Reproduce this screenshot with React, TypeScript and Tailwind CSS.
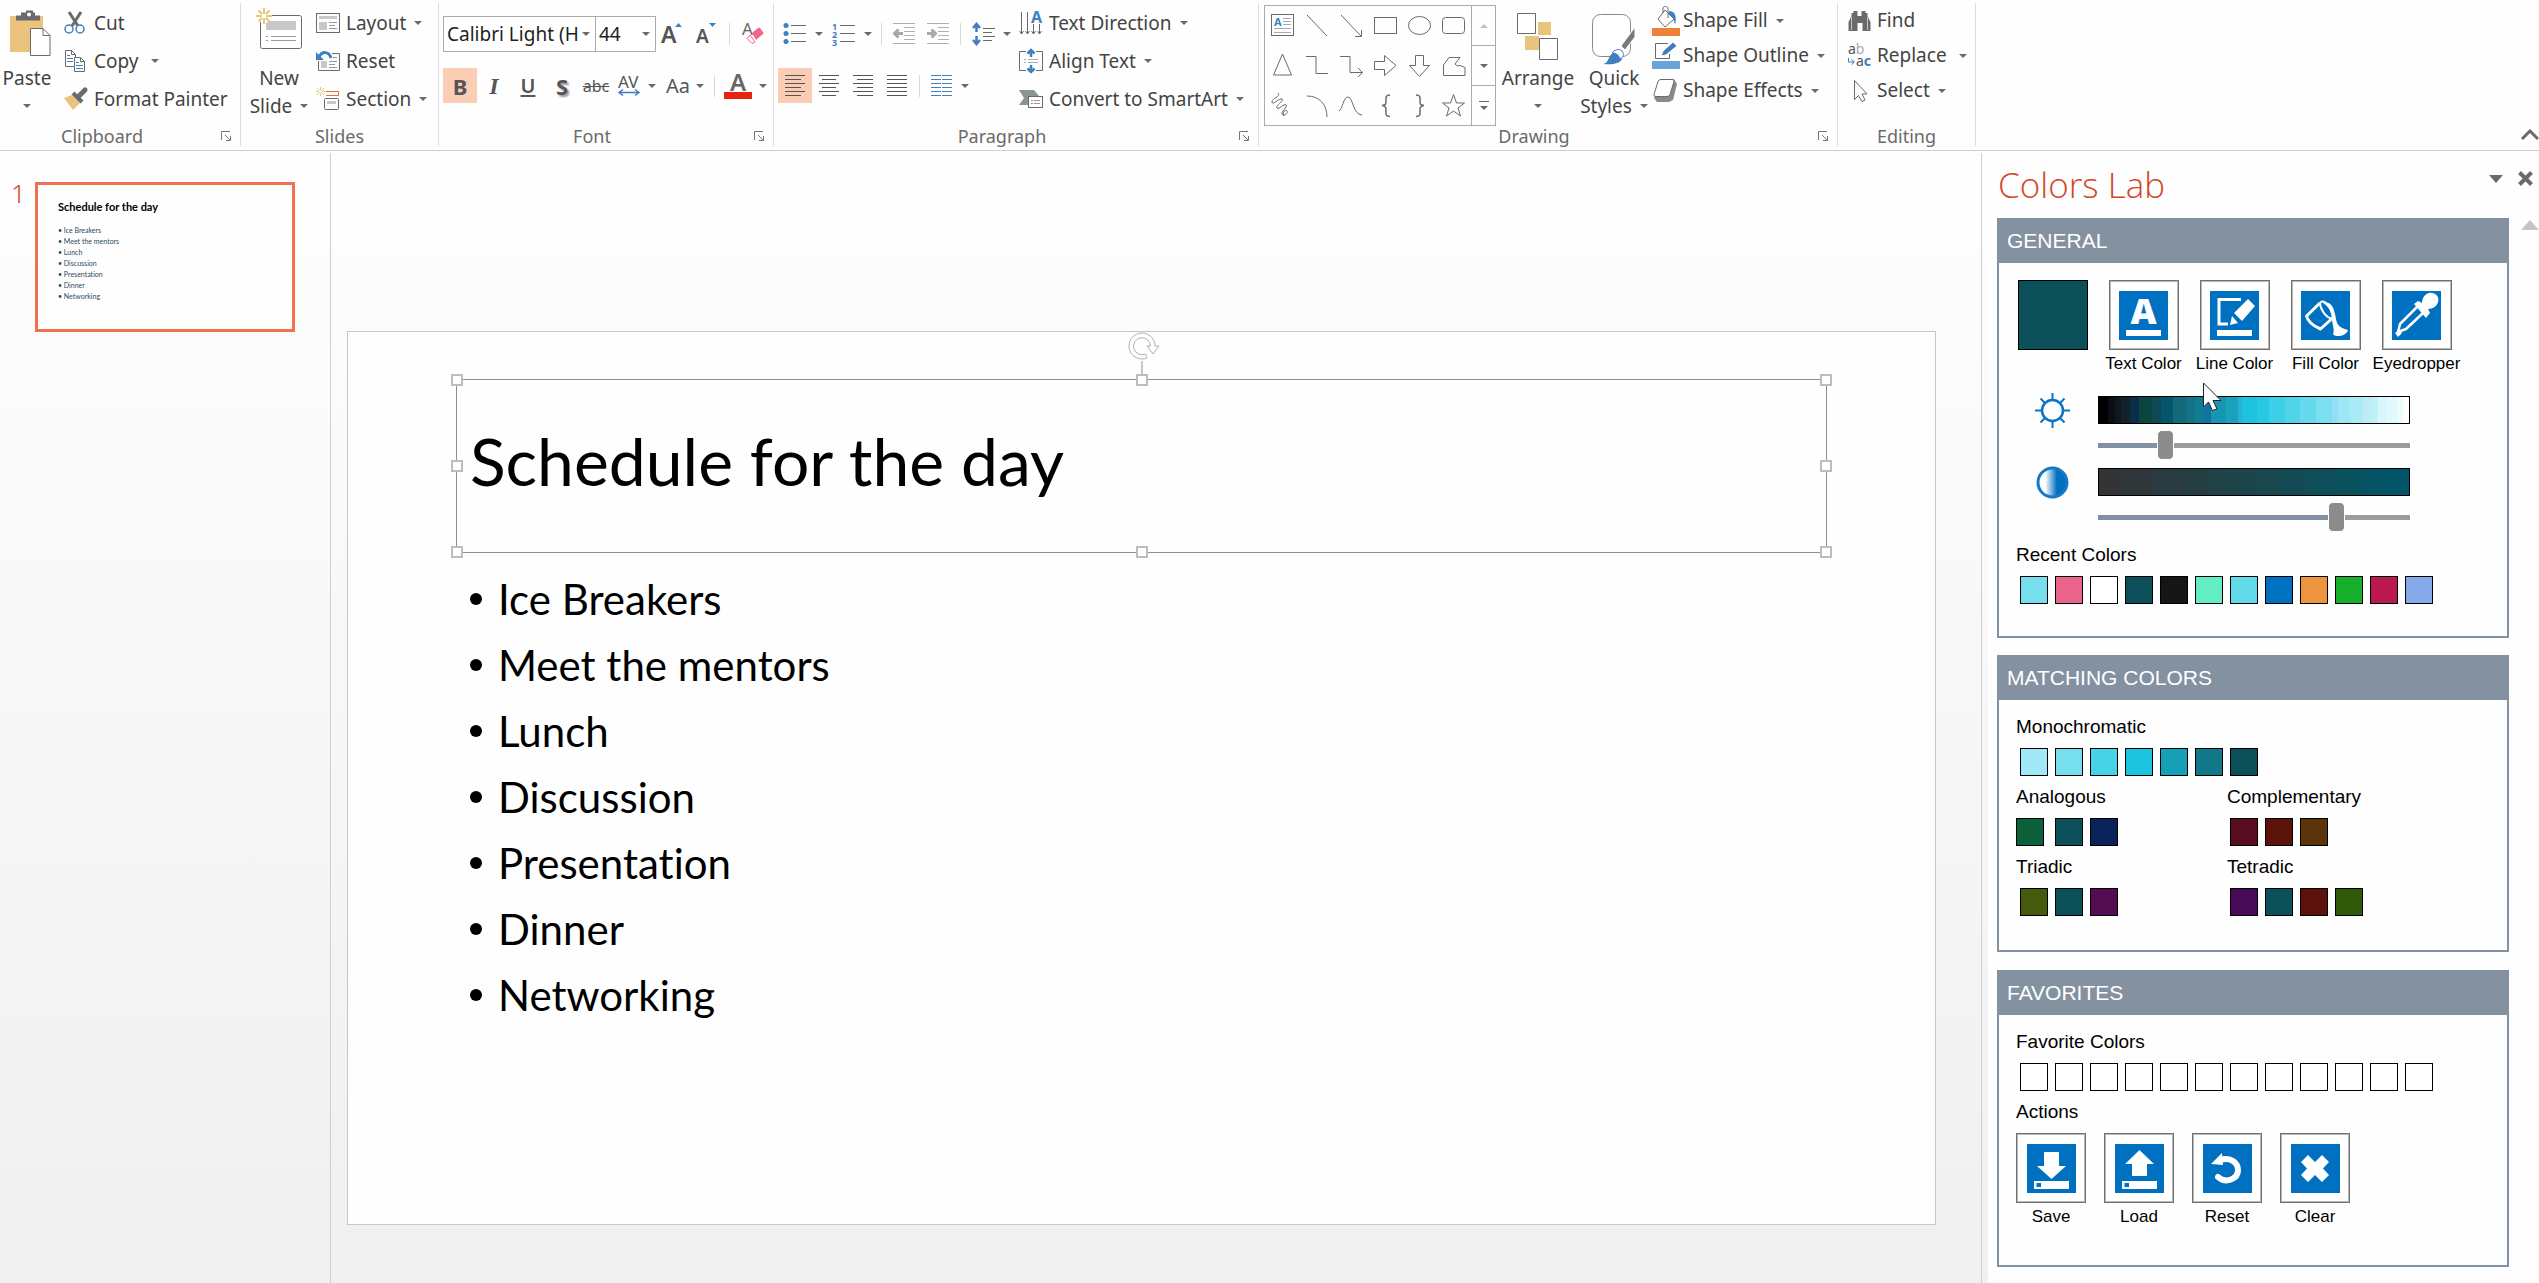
import React, { useState } from "react";

type Kids = { children?: React.ReactNode };

/* ---------- small building blocks ---------- */

const Icon = ({ w, h, children }: { w: number; h: number } & Kids) => (
  <svg width={w} height={h} viewBox={`0 0 ${w} ${h}`} fill="none" stroke="#6a6a6a" className="shrink-0 overflow-visible" aria-hidden="true">
    {children}
  </svg>
);

const Caret = ({ light = false }: { light?: boolean }) => (
  <svg width="8" height="4" viewBox="0 0 8 4" className="shrink-0" aria-hidden="true">
    <path d="M0 0h8L4 4z" fill={light ? "#c4c4c4" : "#6a6a6a"} />
  </svg>
);

const Launcher = () => (
  <svg width="11" height="11" viewBox="0 0 11 11" fill="none" stroke="#777" aria-hidden="true">
    <path d="M.5 9V.5H9M4 4l5 5M9.5 5v4.500H5" />
  </svg>
);

const Group = ({ label, launcher, className, labelClass = "", children }: { label: string; launcher?: boolean; className: string; labelClass?: string } & Kids) => (
  <section aria-label={label} className={`flex shrink-0 flex-col border-r border-[#dcdcdc] ${className}`}>
    <div className="flex h-[123px] items-start">{children}</div>
    <div className={`flex h-5 items-center ${labelClass}`}>
      <span className="flex-1 text-center text-[18px] leading-5 text-[#6a6a6a]">{label}</span>
      {launcher && (
        <button aria-label={`${label} settings`} className="flex w-7 justify-center">
          <Launcher />
        </button>
      )}
    </div>
  </section>
);

const Item = ({ icon, label, caret, tall = true, wideGap = false }: { icon: React.ReactNode; label: string; caret?: boolean; tall?: boolean; wideGap?: boolean }) => (
  <button className={`flex items-center whitespace-nowrap ${tall ? "h-[38px]" : "h-[35px]"}`}>
    {icon}
    <span className="ml-1.5">{label}</span>
    {caret && (
      <span className={wideGap ? "ml-3" : "ml-2"}>
        <Caret />
      </span>
    )}
  </button>
);

const Big = ({ icon, top, bottom, className }: { icon: React.ReactNode; top: string; bottom?: string; className: string }) => (
  <button className={`flex shrink-0 flex-col items-center whitespace-nowrap leading-7 ${className}`}>
    {icon}
    <span>{top}</span>
    <span className="flex h-7 items-center gap-2">
      {bottom}
      <Caret />
    </span>
  </button>
);

const Tool = ({ label, active, className = "w-[34px]", children }: { label: string; active?: boolean; className?: string } & Kids) => (
  <button aria-label={label} className={`flex h-[35px] shrink-0 items-center justify-center ${active ? "bg-[#fbcdb5]" : ""} ${className}`}>
    {children}
  </button>
);

const Sep = () => <span className="mx-[5px] h-[22px] w-px shrink-0 bg-[#d8d8d8]" />;

const Combo = ({ label, value, className }: { label: string; value: string; className: string }) => (
  <div className={`relative h-9 shrink-0 ${className}`}>
    <select aria-label={label} className="h-full w-full appearance-none overflow-hidden rounded-none border border-[#ababab] bg-white pr-[17px] pl-[3px] text-[19px] text-[#1e1e1e]">
      <option>{value}</option>
    </select>
    <span className="pointer-events-none absolute top-1/2 right-1.5 -translate-y-1/2">
      <Caret />
    </span>
  </div>
);

/* ---------- ribbon icons ---------- */

const PasteIcon = () => (
  <Icon w={48} h={65}>
    <path d="M7 17h33v12H27v24H7z" fill="#eac37c" stroke="none" />
    <path d="M13 21.500v-5h5v-3h5v-2h7v2h2v3h5v5z" fill="#6a6a6a" stroke="none" />
    <circle cx="26" cy="15.500" r="2" fill="#fff" stroke="none" />
    <path d="M27.500 29.500H40l7 7v20H27.500z" fill="#fff" />
    <path d="M40 29.500v7h7" />
  </Icon>
);
const CutIcon = () => (
  <Icon w={22} h={24}>
    <path d="M5 1l9 14M17 1L8 15" strokeWidth="3" />
    <circle cx="5" cy="18" r="4" stroke="#3f7fbf" strokeWidth="1.500" />
    <circle cx="16" cy="18" r="4" stroke="#3f7fbf" strokeWidth="1.500" />
  </Icon>
);
const CopyIcon = () => (
  <Icon w={22} h={24}>
    <path d="M1.500 1.500h6l4 4v12h-10zM7.500 1.500v4h4" fill="#fff" />
    <path d="M3 6.500h3M3 9.500h6M3 12.500h6" stroke="#3f7fbf" />
    <path d="M10.500 8.500h6l4 4v10h-10zM16.500 8.500v4h4" fill="#fff" />
    <path d="M12 13.500h3M12 16.500h7M12 19.500h7" stroke="#3f7fbf" />
  </Icon>
);
const BrushIcon = () => (
  <Icon w={24} h={24}>
    <path d="M0 11l8-3 8 8-7 7z" fill="#eac37c" stroke="none" />
    <path d="M9 6l9 9" strokeWidth="4" />
    <path d="M15 9l6-6" strokeWidth="5" strokeLinecap="round" />
  </Icon>
);
const spark = "M8 0v16M0 8h16M2.500 2.500l11 11M13.500 2.500l-11 11";
const NewSlideIcon = () => (
  <Icon w={48} h={65}>
    <rect x="5.500" y="16.500" width="41" height="33" rx="2" fill="#fff" />
    <path d="M11 22h30v9H11z" fill="#c8c8c8" stroke="none" />
    <path d="M11 37.500h2M16 37.500h25M11 41.500h2M16 41.500h25" stroke="#999" />
    <g transform="translate(1 9)">
      <circle cx="8" cy="8" r="7" fill="#fff" stroke="none" />
      <path d={spark} stroke="#eac37c" strokeWidth="2" />
      <circle cx="8" cy="8" r="2.500" fill="#fff" stroke="none" />
    </g>
  </Icon>
);
const LayoutIcon = () => (
  <Icon w={24} h={22}>
    <rect x=".5" y="1.500" width="23" height="19" />
    <path d="M3 4h18v3H3zM3 10h8v8H3z" fill="#c8c8c8" stroke="none" />
    <path d="M13 10.500h8M13 13.500h6M13 16.500h8" stroke="#999" />
  </Icon>
);
const ResetIcon = () => (
  <Icon w={24} h={24}>
    <path d="M16 4.500h7.500v17h-21V12" />
    <path d="M5 12h6v7H5z" fill="#c8c8c8" stroke="none" />
    <path d="M17 8.500h4M13 12.500h8M13 15.500h6M13 18.500h8" stroke="#999" />
    <path d="M3 8c3-6 10-6 12 1" stroke="#3f7fbf" strokeWidth="3" />
    <path d="M0 3v8h8z" fill="#3f7fbf" stroke="none" />
  </Icon>
);
const SectionIcon = () => (
  <Icon w={24} h={24}>
    <path d="M4.500 0v9M0 4.500h9M1 1l7 7M8 1L1 8" stroke="#eac37c" />
    <circle cx="4.500" cy="4.500" r="1.500" fill="#fff" stroke="none" />
    <path d="M10 4.500h12.500v4H10" stroke="#e8703a" />
    <rect x="8.500" y="11.500" width="14" height="11" rx="1" />
    <path d="M11 14h9v3h-9z" fill="#c8c8c8" stroke="none" />
  </Icon>
);
const BulletsIcon = ({ numbered = false }: { numbered?: boolean }) => (
  <Icon w={23} h={23}>
    {[2.5, 10.5, 18.5].map((y, i) => (
      <React.Fragment key={y}>
        <path d={`M8 ${y}h15`} />
        {numbered ? (
          <text x="0" y={y + 4} fontSize="9" fontWeight="700" fill="#3f7fbf" stroke="none">{i + 1}</text>
        ) : (
          <circle cx="3" cy={y} r="2.500" fill="#3f7fbf" stroke="none" />
        )}
      </React.Fragment>
    ))}
  </Icon>
);
const IndentIcon = ({ flip = false }: { flip?: boolean }) => (
  <Icon w={22} h={22}>
    <path d="M0 .5h22M11 4.500h11M11 8.500h11M11 12.500h11M11 16.500h11M0 20.500h22" stroke="#b0b0b0" />
    <path d={flip ? "M0 10.500h8M4.500 6.500l4 4-4 4" : "M10 10.500H2M5.500 6.500l-4 4 4 4"} stroke="#a8a8a8" strokeWidth="3" />
  </Icon>
);
const SpacingIcon = () => (
  <Icon w={23} h={24}>
    <path d="M4.500 3v7M4.500 14v7M1 6l3.500-4L8 6M1 18l3.500 4L8 18" stroke="#3f7fbf" strokeWidth="2.500" />
    <path d="M11 6.500h12M11 10.500h9M11 14.500h12M11 18.500h9" />
  </Icon>
);
const alignLines: Record<string, string> = {
  left: "M0 .5h20M0 4.500h16M0 8.500h20M0 12.500h16M0 16.500h20M0 20.500h16",
  center: "M0 .5h20M3 4.500h14M0 8.500h20M3 12.500h14M0 16.500h20M3 20.500h14",
  right: "M0 .5h20M4 4.500h16M0 8.500h20M4 12.500h16M0 16.500h20M4 20.500h16",
  justify: "M0 .5h20M0 4.500h20M0 8.500h20M0 12.500h20M0 16.500h20M0 20.500h20",
};
const AlignIcon = ({ kind }: { kind: string }) => (
  <Icon w={20} h={21}>
    <path d={alignLines[kind]} stroke="#555" />
  </Icon>
);
const ColumnsIcon = () => (
  <Icon w={21} h={21}>
    <path d="M0 .5h10M11 .5h10M0 4.500h10M11 4.500h10M0 8.500h10M11 8.500h10M0 12.500h10M11 12.500h10M0 16.500h10M11 16.500h10M0 20.500h10M11 20.500h10" stroke="#3f7fbf" />
  </Icon>
);
const TextDirIcon = () => (
  <Icon w={24} h={26}>
    <path d="M2.500 2v22M8.500 2v22M14.500 14v10M20.500 14v10M.5 21l2 3 2-3M6.500 21l2 3 2-3M12.500 21l2 3 2-3M18.500 21l2 3 2-3" />
    <text x="12" y="13" fontSize="16" fontWeight="700" fill="#3f7fbf" stroke="none">A</text>
  </Icon>
);
const AlignTextIcon = () => (
  <Icon w={24} h={24}>
    <path d="M7 2.500H.5v19H7M17 2.500h6.500v19H17" />
    <path d="M5 10.500h2M9 10.500h10M5 13.500h2M9 13.500h10" stroke="#aaa" />
    <path d="M12 2v6M12 22v-6M8.500 4.500L12 1l3.500 3.500M8.500 19.500L12 23l3.500-3.500" stroke="#3f7fbf" strokeWidth="2.500" />
  </Icon>
);
const SmartArtIcon = () => (
  <Icon w={24} h={22}>
    <path d="M0 2h15l5 6h-8v9H0l5-7z" fill="#8a9690" stroke="none" />
    <rect x="9.500" y="8.500" width="14" height="11" fill="#fff" />
    <path d="M12 12.500h2M15 12.500h6M12 15.500h2M15 15.500h6" stroke="#999" />
  </Icon>
);
const ArrangeIcon = () => (
  <Icon w={42} h={65}>
    <path d="M21 23h13v13H21zM8 37h14v14H8z" fill="#eac37c" stroke="none" />
    <path d="M.5 14.500h18v20H.5zM22.500 39.500h18v21h-18z" fill="#fff" />
  </Icon>
);
const QuickIcon = () => (
  <Icon w={46} h={65}>
    <rect x="1.500" y="15.500" width="38" height="42" rx="8" fill="#fff" stroke="#888" />
    <path d="M30 47L44 28v10L34 51z" fill="#7a7a7a" stroke="#fff" />
    <path d="M28 48l5 5" stroke="#fff" strokeWidth="2" />
    <path d="M12 65c5-1 5-5 7-8 2-4 8-5 11-2 3 4 0 8-4 9-5 2-10 1-14 1z" fill="#3f7fbf" stroke="none" />
    <path d="M21 54c2-3 7-5 10-2s1 7-2 8c-1-4-4-6-8-6z" fill="#fff" stroke="#3f7fbf" />
  </Icon>
);
const FillIcon = () => (
  <Icon w={28} h={32}>
    <path d="M0 23h28v8H0z" fill="#ed8136" stroke="none" />
    <path d="M13 5l9 9-9 8-7-8z" fill="#fff" />
    <path d="M11 8V3c0-2 5-2 5 0v10" />
    <path d="M17 6c6 0 8 5 6 14-1-5-1-8-6-10z" fill="#3f7fbf" stroke="none" />
  </Icon>
);
const OutlineIcon = () => (
  <Icon w={28} h={32}>
    <path d="M0 21h28v8H0z" fill="#69a4d8" stroke="none" />
    <path d="M16 3.500H3.500v15h14V14" />
    <path d="M9 16l2-5L21 2l4 4-11 9z" fill="#3f7fbf" stroke="#fff" />
  </Icon>
);
const EffectsIcon = () => (
  <Icon w={28} h={26}>
    <path d="M8 3l14-2 3 5-4 16-4 2H5l-3-4z" fill="#8a8a8a" stroke="none" />
    <path d="M9 1.500h11q2.500 0 2 2l-4 13q-.5 2-3 2H4q-2.500 0-2-2l4-13q.5-2 3-2z" fill="#fff" />
  </Icon>
);
const FindIcon = () => (
  <Icon w={23} h={22}>
    <path d="M0 21V12L3 6V3h2V1h4v5h4V1h4v2h2v3l3 6v9h-8v-8h-5v8z" transform="translate(.5)" fill="#6a6a6a" stroke="none" />
    <path d="M3.500 7v13M19.500 7v13" stroke="#fff" strokeWidth=".6" />
  </Icon>
);
const ReplaceIcon = () => (
  <Icon w={23} h={24}>
    <text x="0" y="10" fontSize="14" fill="#555" stroke="none">a<tspan fill="#aaa">b</tspan></text>
    <text x="8" y="22" fontSize="14" fill="#555" stroke="none">a<tspan fontWeight="700" fill="#3f7fbf">c</tspan></text>
    <path d="M.5 14v4H6M3.500 15.500l3 2.500-3 2.500" stroke="#3f7fbf" />
  </Icon>
);
const SelectIcon = () => (
  <Icon w={23} h={24}>
    <path d="M6.500 1.500v19l4-4 3.500 6 3-1.500-3-6h5z" />
  </Icon>
);

const shapes: { name: string; art: React.ReactNode }[] = [
  { name: "Text box", art: <><rect x="2.500" y="2.500" width="22" height="21" /><path d="M14 6.500h8M14 9.500h8M14 12.500h8M5 16.500h17M5 20.500h17" stroke="#aaa" /><text x="5" y="14" fontSize="11" fontWeight="700" fill="#3f7fbf" stroke="none">A</text></> },
  { name: "Line", art: <path d="M4 3l20 21" /> },
  { name: "Arrow", art: <path d="M4 3l20 21M24.500 18v6.500H18" /> },
  { name: "Rectangle", art: <rect x="2.500" y="5.500" width="22" height="16" /> },
  { name: "Oval", art: <ellipse cx="13.500" cy="13.500" rx="11" ry="9" /> },
  { name: "Rounded rectangle", art: <rect x="2.500" y="5.500" width="22" height="16" rx="3" /> },
  { name: "Triangle", art: <path d="M13.500 2l9 21h-18z" /> },
  { name: "Elbow connector", art: <path d="M3 4.500h10v17h12" /> },
  { name: "Elbow arrow", art: <path d="M3 4.500h10v16h12M21 16l4.500 4.500L21 25" /> },
  { name: "Right arrow", art: <path d="M2.500 9.500h10v-6L24 13.500l-11.500 10v-6h-10z" /> },
  { name: "Down arrow", art: <path d="M9.500 3.500h8v10h6l-10 11-10-11h6z" /> },
  { name: "Freeform", art: <path d="M9 5.500h11l-5 6.500q2 3 5 1.500l5 2v8H3.500V13z" /> },
  { name: "Scribble", art: <path d="M9 1c3 4-6 5-6 9s7-4 10-3-7 7-5 9 7-5 9-3-5 6-4 9 7-1 5-3-5 1-3 5" /> },
  { name: "Arc", art: <path d="M4 4c12 0 20 8 20 21" /> },
  { name: "Curve", art: <path d="M2 19C6 17 6 5 11 5s5 18 14 18" /> },
  { name: "Left brace", art: <path d="M18 3c-5 0-4 3-4 6s0 4-4 4.500c4 .5 4 2 4 5s-1 6 4 6" strokeWidth="1.500" /> },
  { name: "Right brace", art: <path d="M10 3c5 0 4 3 4 6s0 4 4 4.500c-4 .5-4 2-4 5s1 6-4 6" strokeWidth="1.500" /> },
  { name: "Star", art: <path d="M13.500 2.500l3 8.500h8l-6.500 5 2.500 8-7-5-7 5 2.500-8-6.500-5h8z" /> },
];

/* ---------- ribbon ---------- */

const Ribbon = () => (
  <header className="flex h-[151px] border-b border-[#cfcfcf] bg-[#fefefe] pt-[3px] pb-1">
    <Group label="Clipboard" launcher className="w-[241px]" labelClass="-ml-2">
      <Big icon={<span className="-mt-1"><PasteIcon /></span>} top="Paste" className="w-[54px]" />
      <div className="ml-2.5 flex flex-col pt-px">
        <span className="[&>button>span]:ml-2"><Item icon={<CutIcon />} label="Cut" /></span>
        <span className="[&>button>span]:ml-2 [&>button>span:last-child]:ml-3"><Item icon={<CopyIcon />} label="Copy" caret /></span>
        <span><Item icon={<BrushIcon />} label="Format Painter" /></span>
      </div>
    </Group>
    <Group label="Slides" className="w-[198px]">
      <Big icon={<span className="-mt-1"><NewSlideIcon /></span>} top="New" bottom="Slide" className="ml-2 w-[60px]" />
      <div className="ml-[7px] flex flex-col pt-px">
        <Item icon={<LayoutIcon />} label="Layout" caret />
        <Item icon={<ResetIcon />} label="Reset" />
        <Item icon={<SectionIcon />} label="Section" caret />
      </div>
    </Group>
    <Group label="Font" launcher className="w-[335px]">
      <div className="flex flex-col gap-4 pt-[13px] pl-1 text-[#555]">
        <div className="flex items-center">
          <Combo label="Font name" value="Calibri Light (Headings)" className="w-[153px]" />
          <Combo label="Font size" value="44" className="-ml-px w-[61px]" />
          <Tool label="Increase font size">
            <Icon w={24} h={26}>
              <text x="0" y="22" fontSize="23" fontWeight="600" fill="#555" stroke="none">A</text>
              <path d="M14 6l3.500-4L21 6z" fill="#3f7fbf" stroke="none" />
            </Icon>
          </Tool>
          <Tool label="Decrease font size">
            <Icon w={22} h={26}>
              <text x="0" y="22" fontSize="19" fontWeight="600" fill="#555" stroke="none">A</text>
              <path d="M13 2h7l-3.500 4z" fill="#3f7fbf" stroke="none" />
            </Icon>
          </Tool>
          <Sep />
          <Tool label="Clear formatting">
            <Icon w={24} h={26}>
              <text x="2" y="14" fontSize="17" fill="#666" stroke="none">A</text>
              <path d="M12 12l6-5q1-1 2 0l3 4q1 1 0 2l-7 6z" fill="#f0688a" stroke="none" />
              <path d="M10 14l5 7-3 1.500-5-5z" fill="#fff" stroke="#f0688a" />
            </Icon>
          </Tool>
        </div>
        <div className="flex items-center leading-7">
          <Tool label="Bold" active><b className="text-[22px]">B</b></Tool>
          <Tool label="Italic"><i className="font-['Liberation_Serif',serif] text-[24px] font-bold">I</i></Tool>
          <Tool label="Underline"><u className="text-[20px] font-semibold underline-offset-2">U</u></Tool>
          <Tool label="Shadow"><b className="text-[22px] text-shadow-[2px_2px_2px_#999]">S</b></Tool>
          <Tool label="Strikethrough"><s className="text-[16px]">abc</s></Tool>
          <Tool label="Character spacing" className="w-12 gap-2">
            <Icon w={22} h={24}>
              <text x="0" y="14" fontSize="17" fill="#555" stroke="none">AV</text>
              <path d="M1 18.500h20M5 15.500l-4 3 4 3M17 15.500l4 3-4 3" stroke="#3f7fbf" strokeWidth="1.500" />
            </Icon>
            <Caret />
          </Tool>
          <Tool label="Change case" className="w-12 gap-1.5"><span className="text-[20px]">Aa</span><Caret /></Tool>
          <Sep />
          <Tool label="Font color" className="w-[51px] gap-[7px]">
            <Icon w={28} h={26}>
              <text x="6" y="18" fontSize="24" fontWeight="600" fill="#666" stroke="none">A</text>
              <path d="M0 19h28v7H0z" fill="#e42313" stroke="none" />
            </Icon>
            <Caret />
          </Tool>
        </div>
      </div>
    </Group>
    <Group label="Paragraph" launcher className="w-[485px]">
      <div className="flex w-[245px] shrink-0 flex-col gap-4 pt-[13px] pl-1">
        <div className="flex h-9 items-center">
          <Tool label="Bullets" className="w-[49px] gap-[9px]"><BulletsIcon /><Caret /></Tool>
          <Tool label="Numbering" className="w-[49px] gap-[9px]"><BulletsIcon numbered /><Caret /></Tool>
          <Sep />
          <Tool label="Decrease indent"><IndentIcon /></Tool>
          <Tool label="Increase indent"><IndentIcon flip /></Tool>
          <Sep />
          <Tool label="Line spacing" className="w-[50px] gap-2"><SpacingIcon /><Caret /></Tool>
        </div>
        <div className="flex items-center">
          <Tool label="Align left" active><AlignIcon kind="left" /></Tool>
          <Tool label="Center"><AlignIcon kind="center" /></Tool>
          <Tool label="Align right"><AlignIcon kind="right" /></Tool>
          <Tool label="Justify"><AlignIcon kind="justify" /></Tool>
          <Sep />
          <Tool label="Columns" className="w-[49px] gap-[9px]"><ColumnsIcon /><Caret /></Tool>
        </div>
      </div>
      <div className="flex flex-col pt-px">
        <Item icon={<TextDirIcon />} label="Text Direction" caret />
        <Item icon={<AlignTextIcon />} label="Align Text" caret />
        <Item icon={<SmartArtIcon />} label="Convert to SmartArt" caret />
      </div>
    </Group>
    <Group label="Drawing" launcher className="w-[579px]">
      <div className="mt-0.5 ml-[5px] flex h-[121px] w-[232px] shrink-0 border border-[#ababab]">
        <div className="grid flex-1 grid-cols-6 grid-rows-3">
          {shapes.map((s) => (
            <button key={s.name} aria-label={s.name} className="flex items-center justify-center">
              <Icon w={27} h={27}>{s.art}</Icon>
            </button>
          ))}
        </div>
        <div className="flex w-6 flex-col divide-y divide-[#ababab] border-l border-[#ababab]">
          <button aria-label="Previous shapes" className="flex flex-1 items-center justify-center"><span className="rotate-180"><Caret light /></span></button>
          <button aria-label="Next shapes" className="flex flex-1 items-center justify-center"><Caret /></button>
          <button aria-label="More shapes" className="flex flex-1 flex-col items-center justify-center gap-1"><span className="h-px w-2.5 bg-[#6a6a6a]" /><Caret /></button>
        </div>
      </div>
      <Big icon={<span className="-mt-1"><ArrangeIcon /></span>} top="Arrange" className="ml-1 w-[76px]" />
      <Big icon={<span className="-mt-1"><QuickIcon /></span>} top="Quick" bottom="Styles" className="w-[76px]" />
      <div className="flex flex-col [&>button>span:nth-child(2)]:ml-[3px]">
        <Item icon={<FillIcon />} label="Shape Fill" caret tall={false} />
        <Item icon={<OutlineIcon />} label="Shape Outline" caret tall={false} />
        <Item icon={<EffectsIcon />} label="Shape Effects" caret tall={false} />
      </div>
    </Group>
    <Group label="Editing" className="w-[138px]">
      <div className="flex flex-col pl-2.5">
        <Item icon={<FindIcon />} label="Find" tall={false} />
        <Item icon={<ReplaceIcon />} label="Replace" caret tall={false} wideGap />
        <Item icon={<SelectIcon />} label="Select" caret tall={false} />
      </div>
    </Group>
    <button aria-label="Collapse the ribbon" className="ml-auto self-end pb-1.5">
      <svg width="19" height="11" viewBox="0 0 19 11" fill="none" stroke="#6a6a6a" strokeWidth="3" aria-hidden="true">
        <path d="M2 10l8-8 8 8" />
      </svg>
    </button>
  </header>
);

/* ---------- slide ---------- */

const agenda = ["Ice Breakers", "Meet the mentors", "Lunch", "Discussion", "Presentation", "Dinner", "Networking"];

const handles = [
  "-top-1.5 -left-1.5", "-top-1.5 left-1/2 -translate-x-1/2", "-top-1.5 -right-1.5",
  "top-1/2 -left-1.5 -translate-y-1/2", "top-1/2 -right-1.5 -translate-y-1/2",
  "-bottom-1.5 -left-1.5", "-bottom-1.5 left-1/2 -translate-x-1/2", "-bottom-1.5 -right-1.5",
];

const Thumbnails = () => (
  <nav aria-label="Slides" className="flex items-start border-r border-[#cfcfcf] pt-[29px] pl-[11px]">
    <span className="w-6 text-[26px] leading-[22px] font-light text-[#d24726]">1</span>
    <button aria-label="Slide 1" className="flex h-[150px] w-[260px] flex-col border-[3px] border-[#f0704f] bg-[#fefefe] pt-3.5 pl-5 text-left font-[Lato,sans-serif] text-black [font-variant-ligatures:none]">
      <div className="mb-2.5 text-[11px] leading-4 font-bold">Schedule for the day</div>
      {agenda.map((t) => (
        <div key={t} className="text-[7px] leading-[11px] text-[#2c4a5c]">• {t}</div>
      ))}
    </button>
  </nav>
);

const Slide = () => (
  <main className="px-4 pt-[178px] pr-[45px]">
    <div className="aspect-[16/9] w-full border border-[#c6c6c6] bg-[#fefefe] pt-[47px] font-[Lato,sans-serif] text-black [font-variant-ligatures:none]">
      <div className="relative mx-[108px] flex h-[174px] items-center border border-[#8e8e8e] pb-2.5 pl-[13px]">
        <h1 className="text-[66px] leading-none">Schedule for the day</h1>
        {handles.map((h) => (
          <span key={h} className={`absolute h-3 w-3 border-2 border-[#bdbdbd] bg-white ${h}`} />
        ))}
        <svg width="34" height="42" viewBox="0 0 34 42" fill="none" stroke="#b0b0b0" className="absolute -top-12 left-1/2 -translate-x-1/2" aria-hidden="true">
          <path d="M17 29v13" stroke="#8e8e8e" />
          <path d="M22 26a13 13 0 1 1 8-12h4l-6 8-6-8h3.500a8.500 8.500 0 1 0-5 8z" fill="#fff" />
        </svg>
      </div>
      <ul className="mx-[122px] pt-[13px]">
        {agenda.map((t) => (
          <li key={t} className="flex h-[66px] items-center text-[42px] leading-none">
            <span className="mr-4 h-3 w-3 rounded-full bg-black" />
            {t}
          </li>
        ))}
      </ul>
    </div>
  </main>
);

/* ---------- Colors Lab pane ---------- */

const Swatches = ({ colors, name, className = "" }: { colors: string[]; name: string; className?: string }) => (
  <div className={`flex gap-[7px] ${className}`}>
    {colors.map((c, i) => (
      <button key={i} aria-label={`${name} ${i + 1}`} className="h-7 w-7 border border-black" style={{ backgroundColor: c }} />
    ))}
  </div>
);

const Card = ({ title, className, children }: { title: string; className: string } & Kids) => (
  <section aria-label={title} className={`border-2 border-[#8391a0] bg-[#fefefe] text-black ${className}`}>
    <h2 className="-mx-0.5 -mt-0.5 flex h-[45px] items-center bg-[#8391a0] pl-2.5 text-[21px] text-white">{title}</h2>
    {children}
  </section>
);

const Label = ({ children }: Kids) => <h3 className="h-[42px] text-[19px] leading-[42px]">{children}</h3>;

const IconButton = ({ label, children, className }: { label: string; className: string } & Kids) => (
  <button className={`flex flex-col items-center ${className}`}>
    <span className="flex h-[70px] w-[70px] items-center justify-center border border-[#707070] bg-white ring-1 ring-[#b8b8b8] ring-inset">
      <svg width="49" height="49" viewBox="0 0 49 49" fill="none" className="overflow-visible bg-[#0070c0]" aria-hidden="true">{children}</svg>
    </span>
    <span className="text-[17px] leading-7 whitespace-nowrap">{label}</span>
  </button>
);

const bands: [number, string][] = [
  [3, "#000000"], [5, "#0b0d14"], [7, "#11181c"], [10, "#13222a"], [13, "#0a2e4a"], [17, "#0c4440"], [20, "#0f4a54"],
  [24, "#04566a"], [28, "#126a78"], [31, "#127286"], [34, "#107c92"], [36, "#0f74a0"], [41, "#1796b4"], [45, "#18a2bc"],
  [46, "#2ab0d8"], [51, "#1cc2de"], [55, "#28c8e4"], [60, "#3cd0e8"], [65, "#50d4e8"], [70, "#66daec"], [75, "#7cdff0"],
  [77, "#92def6"], [81, "#9ce6f6"], [85, "#a8eaf6"], [88, "#c0ebf5"], [90, "#bcf2f8"], [93, "#d8f6fc"], [96, "#e0fafc"],
  [98, "#ecfcfe"], [100, "#ffffff"],
];
const saturation: [number, string][] = [
  [7, "#333436"], [17, "#2f373a"], [27, "#283b41"], [35, "#233d42"], [42, "#204247"], [50, "#1c444a"], [58, "#18484e"],
  [67, "#134a54"], [76, "#0e4e58"], [85, "#09515c"], [92, "#055365"], [100, "#025468"],
];
const banded = (stops: [number, string][]) =>
  `linear-gradient(90deg, ${stops.map(([end, c], i) => `${c} ${i ? stops[i - 1][0] : 0}% ${end}%`).join(", ")})`;

const Tone = ({ label, stops, start, icon }: { label: string; stops: [number, string][]; start: number; icon: React.ReactNode }) => {
  const [v, setV] = useState(start);
  return (
    <div className="flex h-[72px] gap-7">
      <div className="flex h-7 w-[35px] items-center justify-center">{icon}</div>
      <div className="w-[312px]">
        <div className="h-7 border border-black" style={{ backgroundImage: banded(stops) }} />
        <input
          type="range"
          aria-label={label}
          value={v}
          onChange={(e) => setV(Number(e.target.value))}
          className="mt-1.5 block h-[30px] w-full appearance-none bg-[length:100%_5px] bg-center bg-no-repeat [&::-webkit-slider-thumb]:h-[30px] [&::-webkit-slider-thumb]:w-[17px] [&::-webkit-slider-thumb]:appearance-none [&::-webkit-slider-thumb]:rounded-[5px] [&::-webkit-slider-thumb]:border [&::-webkit-slider-thumb]:border-white [&::-webkit-slider-thumb]:bg-[#8c8c8c]"
          style={{ backgroundImage: `linear-gradient(90deg, #8090a0 ${v}%, #9c9c9c ${v}%)` }}
        />
      </div>
    </div>
  );
};

const SunIcon = () => (
  <svg width="35" height="35" viewBox="0 0 35 35" fill="none" stroke="#0c74c4" strokeWidth="2" className="shrink-0" aria-hidden="true">
    <circle cx="17.500" cy="17.500" r="10.500" strokeWidth="2.500" />
    <path d="M17.500 0v6M17.500 29v6M0 17.500h6M29 17.500h6M5.500 5.500l4 4M25.500 25.500l4 4M29.500 5.500l-4 4M9.500 25.500l-4 4" />
  </svg>
);
const ContrastIcon = () => (
  <svg width="33" height="33" viewBox="0 0 33 33" className="shrink-0" aria-hidden="true">
    <defs>
      <linearGradient id="contrast">
        <stop offset="0.250" stopColor="#fff" />
        <stop offset="0.650" stopColor="#0070c0" />
      </linearGradient>
    </defs>
    <circle cx="16.500" cy="16.500" r="14.500" fill="url(#contrast)" stroke="#1878c4" strokeWidth="3" />
  </svg>
);

const Pane = () => (
  <aside aria-label="Colors Lab" className="flex flex-col bg-[#fefefe] font-['Liberation_Sans',Arial,sans-serif]">
    <div className="flex h-[65px] items-center pl-2.5 font-['Open_Sans','Noto_Sans',sans-serif]">
      <h1 className="text-[35px] font-light text-[#d24726]">Colors Lab</h1>
      <button aria-label="Pane options" className="mr-[15px] mb-3.5 ml-auto">
        <svg width="14" height="8" viewBox="0 0 14 8" aria-hidden="true"><path d="M0 0h14L7 8z" fill="#6a6a6a" /></svg>
      </button>
      <button aria-label="Close pane" className="mr-1.5 mb-3.5">
        <svg width="15" height="15" viewBox="0 0 15 15" stroke="#6a6a6a" strokeWidth="4" aria-hidden="true"><path d="M1.500 1.500l12 12M13.500 1.500l-12 12" /></svg>
      </button>
    </div>
    <div className="flex">
      <div className="ml-[9px] flex flex-1 flex-col">
        <Card title="GENERAL" className="mb-[17px] h-[420px]">
          <div className="flex items-start pt-[17px] pl-[19px]">
            <button aria-label="Selected color" className="mr-2.5 h-[70px] w-[70px] border border-black bg-[#0b4f59]" />
            <IconButton label="Text Color" className="w-[91px]">
              <text x="24.500" y="33" textAnchor="middle" fontSize="36" fontWeight="800" fill="#fff" className="font-['Open_Sans',sans-serif]">A</text>
              <path d="M7 39h35v6H7z" fill="#fff" />
            </IconButton>
            <IconButton label="Line Color" className="w-[91px]">
              <path d="M31 8.500H9V33h9" stroke="#fff" strokeWidth="3" />
              <path d="M20 34l2-9 6 7z M24 22l14-14 7 7-13 15z" fill="#fff" />
              <path d="M7 39h35v6H7z" fill="#fff" />
            </IconButton>
            <IconButton label="Fill Color" className="w-[91px]">
              <path d="M19 12L5.500 25q2 8 14 13l11-10" stroke="#fff" strokeWidth="3" strokeLinejoin="round" />
              <path d="M19 12c2-4 8 0 11 6s3 10-1 9-10-9-10-15z" stroke="#fff" strokeWidth="2" />
              <path d="M22 12c8-2 11 4 13 16 1 7 5 9 12 11-1 6-13 8-15 4 2-4-1-10-1-15-1-8-3-12-9-16z" fill="#fff" />
            </IconButton>
            <IconButton label="Eyedropper" className="w-[91px]">
              <path d="M25 16L8 33l-2 8 8-3 17-16" stroke="#fff" strokeWidth="2.500" strokeLinejoin="round" />
              <path d="M3 42l4-3 3 3-4 4z" fill="#fff" />
              <path d="M22 13l4-3 4 2c0-5 3-9 7-10 6-1 11 4 9 9-1 4-5 7-10 7l2 4-4 5z" fill="#fff" />
            </IconButton>
          </div>
          <div className="relative mt-[18px] pl-9">
            <Tone label="Brightness" stops={bands} start={20} icon={<SunIcon />} />
            <Tone label="Saturation" stops={saturation} start={78} icon={<ContrastIcon />} />
            <svg width="20" height="29" viewBox="0 0 20 29" className="pointer-events-none absolute -top-3.5 left-[204px]" aria-hidden="true">
              <path d="M.5 1v24l5-5 4 8.500 4.500-1.500-4-8.500h8z" fill="#fff" stroke="#222" />
            </svg>
          </div>
          <div className="-mt-1.5 pl-[17px]">
            <Label>Recent Colors</Label>
            <Swatches name="Recent color" className="pl-1" colors={["#76deec", "#ec648c", "#ffffff", "#0b4f59", "#161416", "#62eec2", "#62daea", "#0070c0", "#ec9440", "#16b02c", "#bc1a4e", "#84aaea"]} />
          </div>
        </Card>
        <Card title="MATCHING COLORS" className="mb-[18px] h-[297px]">
          <div className="pt-1.5 pl-[17px]">
            <Label>Monochromatic</Label>
            <Swatches name="Monochromatic" className="pl-1" colors={["#a0e8f6", "#76deec", "#48d2e6", "#1cc4e0", "#16a0b8", "#107888", "#0b4f59"]} />
            <div className="grid grid-cols-[211px_1fr]">
              <div>
                <Label>Analogous</Label>
                <Swatches name="Analogous" className="[&>button:first-child]:mr-1" colors={["#0b603a", "#0b4f59", "#0a245a"]} />
              </div>
              <div>
                <Label>Complementary</Label>
                <Swatches name="Complementary" className="pl-[3px]" colors={["#5a0c20", "#5a120a", "#5a340a"]} />
              </div>
              <div>
                <Label>Triadic</Label>
                <Swatches name="Triadic" className="pl-1" colors={["#465a0c", "#0b4f59", "#540c50"]} />
              </div>
              <div>
                <Label>Tetradic</Label>
                <Swatches name="Tetradic" className="pl-[3px]" colors={["#460c58", "#0b4f59", "#5a120a", "#305a0a"]} />
              </div>
            </div>
          </div>
        </Card>
        <Card title="FAVORITES" className="h-[297px]">
          <div className="pt-1.5 pl-[17px]">
            <Label>Favorite Colors</Label>
            <Swatches name="Favorite" className="pl-1" colors={Array(12).fill("#ffffff")} />
            <Label>Actions</Label>
            <div className="flex gap-[18px]">
              <IconButton label="Save" className="w-[70px]">
                <path d="M17 8h15v14h7L24.500 35 10 22h7z" fill="#fff" />
                <path d="M7 37h35v8H7zM9.500 39v4H14v-4z" fill="#fff" fillRule="evenodd" />
              </IconButton>
              <IconButton label="Load" className="w-[70px]">
                <path d="M17 32h15V20h7L24.500 6 10 20h7z" fill="#fff" />
                <path d="M7 37h35v8H7zM9.500 39v4H14v-4z" fill="#fff" fillRule="evenodd" />
              </IconButton>
              <IconButton label="Reset" className="w-[70px]">
                <path d="M17 16c10-3 18 2 18 10 0 9-12 14-20 7" stroke="#fff" strokeWidth="6" strokeLinecap="round" />
                <path d="M8 20L19 9l1 12z" fill="#fff" />
              </IconButton>
              <IconButton label="Clear" className="w-[70px]">
                <path d="M17 11l7 7 7-7 7 7-6 6.500 6 6.500-7 7-7-7-7 7-7-7 6-6.500-6-6.500z" fill="#fff" />
              </IconButton>
            </div>
          </div>
        </Card>
      </div>
      <div className="w-[30px] shrink-0 pt-0.5">
        <button aria-label="Scroll up" className="ml-3 block">
          <svg width="18" height="10" viewBox="0 0 18 10" aria-hidden="true"><path d="M0 10h18L9 0z" fill="#c4c4c4" /></svg>
        </button>
      </div>
    </div>
  </aside>
);

export default function App() {
  return (
    <div className="flex min-h-screen flex-col bg-[#fefefe] font-['Noto_Sans','Open_Sans',sans-serif] text-[19px] text-[#444]">
      <Ribbon />
      <div className="grid flex-1 grid-cols-[331px_minmax(0,1fr)_558px] bg-linear-to-b from-[#fefefe] to-[#f0f0f0] pt-0.5">
        <Thumbnails />
        <Slide />
        <div className="border-l border-[#cfcfcf] pl-1.5">
          <div className="h-full bg-[#fefefe]"><Pane /></div>
        </div>
      </div>
    </div>
  );
}
